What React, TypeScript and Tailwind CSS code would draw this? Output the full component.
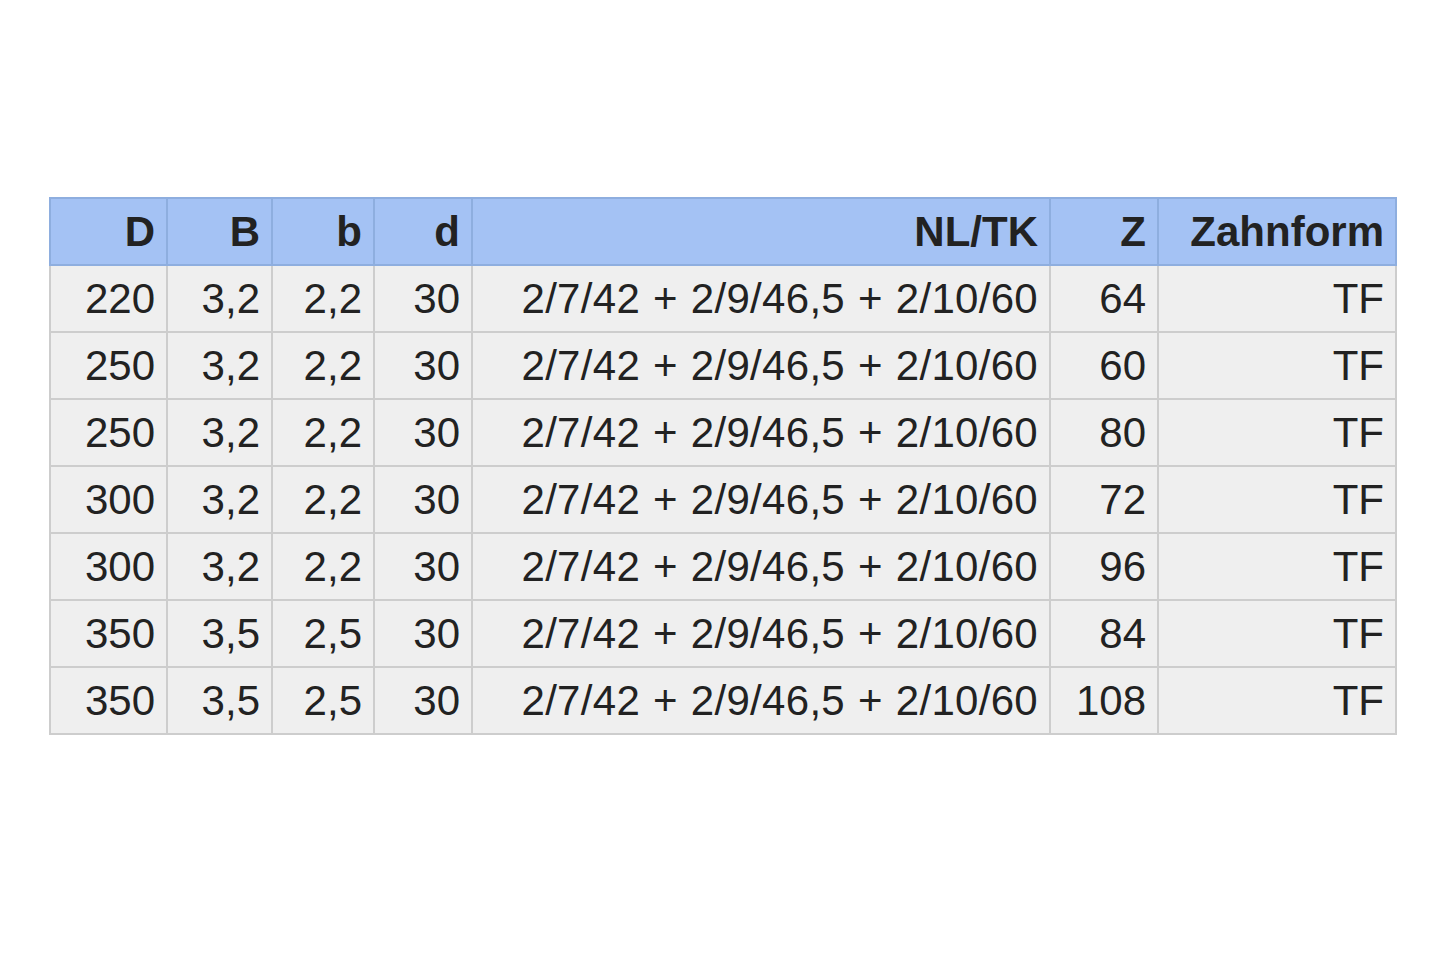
const headers = ['D', 'B', 'b', 'd', 'NL/TK', 'Z', 'Zahnform'];
const widths = ['w-[117px]', 'w-[105px]', 'w-[102px]', 'w-[98px]', 'w-[578px]', 'w-[108px]', 'w-[238px]'];

const nl = '2/7/42 + 2/9/46,5 + 2/10/60';
const rows = [
  ['220', '3,2', '2,2', '30', nl, '64', 'TF'],
  ['250', '3,2', '2,2', '30', nl, '60', 'TF'],
  ['250', '3,2', '2,2', '30', nl, '80', 'TF'],
  ['300', '3,2', '2,2', '30', nl, '72', 'TF'],
  ['300', '3,2', '2,2', '30', nl, '96', 'TF'],
  ['350', '3,5', '2,5', '30', nl, '84', 'TF'],
  ['350', '3,5', '2,5', '30', nl, '108', 'TF'],
];

export default function App() {
  return (
    <div className="min-h-screen bg-white pt-[197px] pl-[49px] font-['Liberation_Sans',Arial,sans-serif] text-[#222222]">
      <table className="border-collapse table-fixed w-[1346px] text-[42px] leading-none">
        <thead>
          <tr className="h-[67px] bg-[#a4c2f4]">
            {headers.map((h, i) => (
              <th
                key={h}
                className={`${widths[i]} border-2 border-[#8eaedf] px-[11px] text-right align-middle font-bold`}
              >
                {h}
              </th>
            ))}
          </tr>
        </thead>
        <tbody>
          {rows.map((r, ri) => (
            <tr key={ri} className="h-[67px] bg-[#efefef]">
              {r.map((c, ci) => (
                <td
                  key={ci}
                  className={`border-2 border-[#cdcdcd] px-[11px] text-right align-middle ${ci === 4 ? 'tracking-[0.3px] [word-spacing:1px]' : ''}`}
                >
                  {c}
                </td>
              ))}
            </tr>
          ))}
        </tbody>
      </table>
    </div>
  );
}
